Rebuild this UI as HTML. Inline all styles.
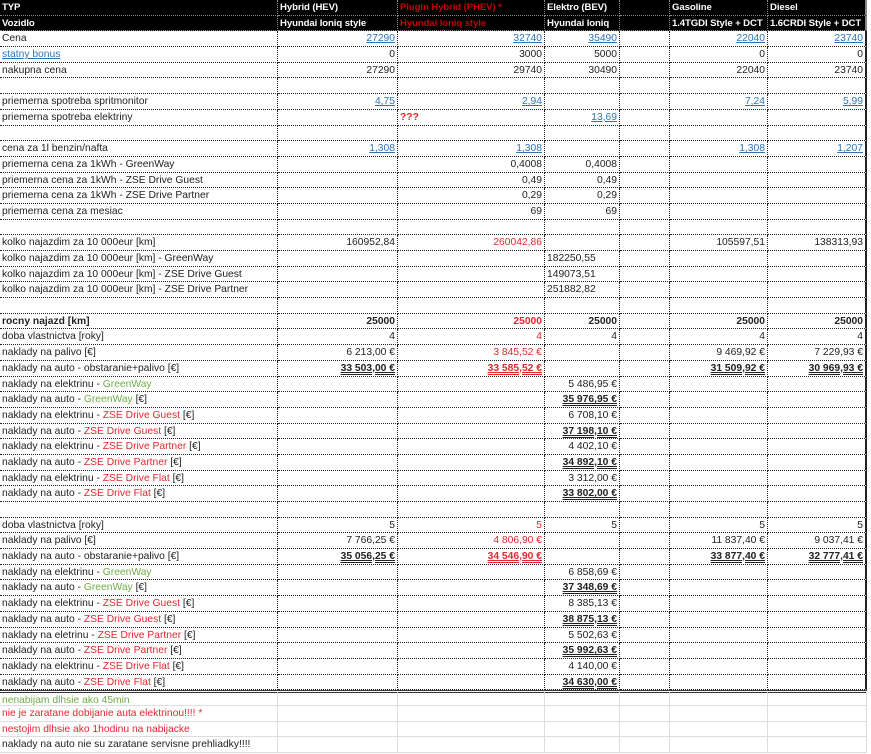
<!DOCTYPE html>
<html><head><meta charset="utf-8"><style>
body{margin:0;background:#fff;width:871px;height:754px;overflow:hidden}
.g{display:grid;grid-template-columns:278px 120px 147px 75px 50px 98px 99px;grid-auto-rows:15.7px;font:10.3px "Liberation Sans",sans-serif;color:#222}
.g>i{font-style:normal;box-sizing:border-box;border-right:1px dotted #222;border-bottom:1px dotted #222;padding:0 2px;white-space:nowrap;overflow:hidden;line-height:15px;text-align:right}
.g>i:nth-child(7n+1){text-align:left}
.g>i:nth-child(7n){border-right:2px solid #222}
.h{background:#000!important;color:#fff;font-weight:bold;text-align:left!important;border-color:#888!important;font-size:9.6px;letter-spacing:-0.1px}
.hr{color:#c00000}
.b{color:#2e75b6;text-decoration:underline}
.r{color:#e0282e}
.gr{color:#70ad47}
.bo{font-weight:bold}
.u{font-weight:bold;text-decoration:underline double}
.n{border-right:1px solid #ddd!important;border-bottom:1px solid #ddd!important;text-align:left!important}
.top{border-top:3px double #333}
</style></head><body><div class="g">
<i class="h">TYP</i><i class="h">Hybrid (HEV)</i><i class="h hr">Plugin Hybrid (PHEV) *</i><i class="h">Elektro (BEV)</i><i class="h"></i><i class="h">Gasoline</i><i class="h">Diesel</i>
<i class="h">Vozidlo</i><i class="h">Hyundai Ioniq style</i><i class="h hr">Hyundai Ioniq style</i><i class="h">Hyundai Ioniq</i><i class="h"></i><i class="h">1.4TGDI Style + DCT</i><i class="h">1.6CRDI Style + DCT</i>
<i>Cena</i><i class="b">27290</i><i class="b">32740</i><i class="b">35490</i><i></i><i class="b">22040</i><i class="b">23740</i>
<i class="b">statny bonus</i><i>0</i><i>3000</i><i>5000</i><i></i><i>0</i><i>0</i>
<i>nakupna cena</i><i>27290</i><i>29740</i><i>30490</i><i></i><i>22040</i><i>23740</i>
<i></i><i></i><i></i><i></i><i></i><i></i><i></i>
<i>priemerna spotreba spritmonitor</i><i class="b">4,75</i><i class="b">2,94</i><i></i><i></i><i class="b">7,24</i><i class="b">5,99</i>
<i>priemerna spotreba elektriny</i><i></i><i class="r bo" style="text-align:left">???</i><i class="b">13,69</i><i></i><i></i><i></i>
<i></i><i></i><i></i><i></i><i></i><i></i><i></i>
<i>cena za 1l benzin/nafta</i><i class="b">1,308</i><i class="b">1,308</i><i></i><i></i><i class="b">1,308</i><i class="b">1,207</i>
<i>priemerna cena za 1kWh - GreenWay</i><i></i><i>0,4008</i><i>0,4008</i><i></i><i></i><i></i>
<i>priemerna cena za 1kWh - ZSE Drive Guest</i><i></i><i>0,49</i><i>0,49</i><i></i><i></i><i></i>
<i>priemerna cena za 1kWh - ZSE Drive Partner</i><i></i><i>0,29</i><i>0,29</i><i></i><i></i><i></i>
<i>priemerna cena za mesiac</i><i></i><i>69</i><i>69</i><i></i><i></i><i></i>
<i></i><i></i><i></i><i></i><i></i><i></i><i></i>
<i>kolko najazdim za 10 000eur [km]</i><i>160952,84</i><i class="r">260042,86</i><i></i><i></i><i>105597,51</i><i>138313,93</i>
<i>kolko najazdim za 10 000eur [km] - GreenWay</i><i></i><i></i><i style="text-align:left">182250,55</i><i></i><i></i><i></i>
<i>kolko najazdim za 10 000eur [km] - ZSE Drive Guest</i><i></i><i></i><i style="text-align:left">149073,51</i><i></i><i></i><i></i>
<i>kolko najazdim za 10 000eur [km] - ZSE Drive Partner</i><i></i><i></i><i style="text-align:left">251882,82</i><i></i><i></i><i></i>
<i></i><i></i><i></i><i></i><i></i><i></i><i></i>
<i class="bo">rocny najazd [km]</i><i class="bo">25000</i><i class="bo r">25000</i><i class="bo">25000</i><i></i><i class="bo">25000</i><i class="bo">25000</i>
<i>doba vlastnictva [roky]</i><i>4</i><i class="r">4</i><i>4</i><i></i><i>4</i><i>4</i>
<i>naklady na palivo [€]</i><i>6 213,00 €</i><i class="r">3 845,52 €</i><i></i><i></i><i>9 469,92 €</i><i>7 229,93 €</i>
<i>naklady na auto - obstaranie+palivo [€]</i><i class="u">33 503,00 €</i><i class="u r">33 585,52 €</i><i></i><i></i><i class="u">31 509,92 €</i><i class="u">30 969,93 €</i>
<i>naklady na elektrinu - <span class="gr">GreenWay</span></i><i></i><i></i><i>5 486,95 €</i><i></i><i></i><i></i>
<i>naklady na auto - <span class="gr">GreenWay</span> [€]</i><i></i><i></i><i class="u">35 976,95 €</i><i></i><i></i><i></i>
<i>naklady na elektrinu - <span class="r">ZSE Drive Guest</span> [€]</i><i></i><i></i><i>6 708,10 €</i><i></i><i></i><i></i>
<i>naklady na auto - <span class="r">ZSE Drive Guest</span> [€]</i><i></i><i></i><i class="u">37 198,10 €</i><i></i><i></i><i></i>
<i>naklady na elektrinu - <span class="r">ZSE Drive Partner</span> [€]</i><i></i><i></i><i>4 402,10 €</i><i></i><i></i><i></i>
<i>naklady na auto - <span class="r">ZSE Drive Partner</span> [€]</i><i></i><i></i><i class="u">34 892,10 €</i><i></i><i></i><i></i>
<i>naklady na elektrinu - <span class="r">ZSE Drive Flat</span> [€]</i><i></i><i></i><i>3 312,00 €</i><i></i><i></i><i></i>
<i>naklady na auto - <span class="r">ZSE Drive Flat</span> [€]</i><i></i><i></i><i class="u">33 802,00 €</i><i></i><i></i><i></i>
<i></i><i></i><i></i><i></i><i></i><i></i><i></i>
<i>doba vlastnictva [roky]</i><i>5</i><i class="r">5</i><i>5</i><i></i><i>5</i><i>5</i>
<i>naklady na palivo [€]</i><i>7 766,25 €</i><i class="r">4 806,90 €</i><i></i><i></i><i>11 837,40 €</i><i>9 037,41 €</i>
<i>naklady na auto - obstaranie+palivo [€]</i><i class="u">35 056,25 €</i><i class="u r">34 546,90 €</i><i></i><i></i><i class="u">33 877,40 €</i><i class="u">32 777,41 €</i>
<i>naklady na elektrinu - <span class="gr">GreenWay</span></i><i></i><i></i><i>6 858,69 €</i><i></i><i></i><i></i>
<i>naklady na auto - <span class="gr">GreenWay</span> [€]</i><i></i><i></i><i class="u">37 348,69 €</i><i></i><i></i><i></i>
<i>naklady na elektrinu - <span class="r">ZSE Drive Guest</span> [€]</i><i></i><i></i><i>8 385,13 €</i><i></i><i></i><i></i>
<i>naklady na auto - <span class="r">ZSE Drive Guest</span> [€]</i><i></i><i></i><i class="u">38 875,13 €</i><i></i><i></i><i></i>
<i>naklady na eletrinu - <span class="r">ZSE Drive Partner</span> [€]</i><i></i><i></i><i>5 502,63 €</i><i></i><i></i><i></i>
<i>naklady na auto - <span class="r">ZSE Drive Partner</span> [€]</i><i></i><i></i><i class="u">35 992,63 €</i><i></i><i></i><i></i>
<i>naklady na elektrinu - <span class="r">ZSE Drive Flat</span> [€]</i><i></i><i></i><i>4 140,00 €</i><i></i><i></i><i></i>
<i>naklady na auto - <span class="r">ZSE Drive Flat</span> [€]</i><i></i><i></i><i class="u">34 630,00 €</i><i></i><i></i><i></i>
<i class="n gr top">nenabijam dlhsie ako 45min</i><i class="n top"></i><i class="n top"></i><i class="n top"></i><i class="n top"></i><i class="n top"></i><i class="n top"></i>
<i class="n r">nie je zaratane dobijanie auta elektrinou!!!! *</i><i class="n"></i><i class="n"></i><i class="n"></i><i class="n"></i><i class="n"></i><i class="n"></i>
<i class="n r">nestojim dlhsie ako 1hodinu na nabijacke</i><i class="n"></i><i class="n"></i><i class="n"></i><i class="n"></i><i class="n"></i><i class="n"></i>
<i class="n">naklady na auto nie su zaratane servisne prehliadky!!!!</i><i class="n"></i><i class="n"></i><i class="n"></i><i class="n"></i><i class="n"></i><i class="n"></i>
</div></body></html>
